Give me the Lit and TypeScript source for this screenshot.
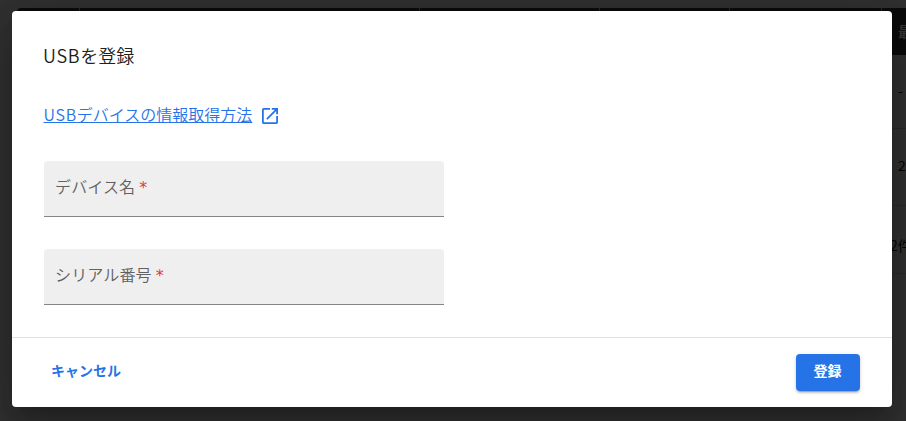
import { LitElement, html, css } from "lit";
import { customElement, property } from "lit/decorators.js";

const uiFont = css`"Noto Sans CJK JP", "Noto Sans", sans-serif`;

@customElement("device-table")
class DeviceTable extends LitElement {
  static styles = css`
    :host { display: block; width: 1100px; color: #050505; font: 14px/20px ${uiFont}; }
    .row { display: grid; grid-template-columns: 63px 340px 180px 130px 152px 1fr; box-sizing: border-box; border-bottom: 1px solid #292929; }
    .head { height: 47px; background: #0b0b0b; color: #353535; border: 0; border-radius: 4px 4px 0 0; font-weight: 700; }
    .first { height: 74px; }
    .second { height: 77px; }
    .cell { box-sizing: border-box; display: flex; align-items: center; padding: 0 16px 4px; }
    .head .cell { border-right: 1px solid #292929; padding-bottom: 2px; }
    .foot { height: 68px; box-sizing: border-box; padding: 29px 0 0 873px; border-bottom: 1px solid #292929; }
  `;
  row(name: string, cells: string[]) {
    return html`<div class="row ${name}">${cells.map((c) => html`<div class="cell">${c}</div>`)}</div>`;
  }
  render() {
    return html`
      ${this.row("head", ["", "", "", "", "", "最"])}
      ${this.row("first", ["", "", "", "", "", "-"])}
      ${this.row("second", ["", "", "", "", "", "2"])}
      <div class="foot">2件</div>
    `;
  }
}

@customElement("text-field")
class TextField extends LitElement {
  @property() label = "";
  static styles = css`
    :host { display: block; }
    .field { box-sizing: border-box; width: 400px; height: 56px; padding: 13px 11px 0; background: #efefef; border-bottom: 1px solid #858585; border-radius: 4px 4px 0 0; color: #606060; font: 350 16px/24px ${uiFont}; letter-spacing: 0.15px; }
    .mark { color: #dc3c3c; margin-left: 4px; font-family: "DejaVu Sans", sans-serif; font-weight: 400; line-height: 1; }
  `;
  render() {
    return html`<div class="field">${this.label}<span class="mark">*</span></div>`;
  }
}

@customElement("app-root")
class AppRoot extends LitElement {
  static styles = css`
    :host { display: block; position: relative; width: 906px; height: 421px; overflow: hidden; background: #303030; font-family: ${uiFont}; }
    .page { padding: 8px 0 0 17px; }
    .overlay { position: absolute; inset: 0; display: flex; padding: 11px 14px 14px 12px; }
    .dialog { flex: 1; display: flex; flex-direction: column; background: #fff; border-radius: 4px; box-shadow: 0 11px 15px -7px rgba(0,0,0,.2), 0 24px 38px 3px rgba(0,0,0,.14), 0 9px 46px 8px rgba(0,0,0,.12); }
    .body { flex: 1; padding: 30px 32px 0 31px; }
    .title { margin: 0; font-weight: 350; font-size: 18px; line-height: 28px; color: #202020; }
    .latin { letter-spacing: 0.7px; }
    .link { display: flex; align-items: center; margin-top: 33px; height: 24px; color: #2673e8; font-weight: 350; font-size: 16px; line-height: 24px; }
    .link a { color: inherit; text-decoration: underline; margin-left: 0.5px; }
    .link svg { margin: 4px 0 0 9.5px; width: 16px; height: 16px; fill: currentColor; }
    .fields { display: flex; flex-direction: column; gap: 32px; margin: 35px 0 0 1px; }
    .actions { display: flex; align-items: center; justify-content: space-between; box-sizing: border-box; height: 70px; border-top: 1px solid #e0e0e0; padding: 0 32px; }
    button { border: 0; padding: 0; background: none; font: 700 14px/20px ${uiFont}; height: 37px; border-radius: 4px; }
    .cancel { padding: 0 7px 5px; color: #2673e8; }
    .submit { width: 64px; padding: 0 1px 5px 0; color: #fff; background: #2673e8; box-shadow: 0 3px 1px -2px rgba(0,0,0,.2), 0 2px 2px rgba(0,0,0,.14), 0 1px 5px rgba(0,0,0,.12); }
  `;
  render() {
    return html`
      <div class="page"><device-table></device-table></div>
      <div class="overlay">
        <div class="dialog">
          <div class="body">
            <h2 class="title"><span class="latin">USB</span>を登録</h2>
            <div class="link">
              <a><span class="latin">USB</span>デバイスの情報取得方法</a>
              <svg viewBox="3 3 18 18"><path d="M19 19H5V5h7V3H5c-1.11 0-2 .9-2 2v14c0 1.1.89 2 2 2h14c1.1 0 2-.9 2-2v-7h-2v7zM14 3v2h3.59l-9.83 9.83 1.41 1.41L19 6.41V10h2V3h-7z"/></svg>
            </div>
            <div class="fields">
              <text-field label="デバイス名"></text-field>
              <text-field label="シリアル番号"></text-field>
            </div>
          </div>
          <div class="actions">
            <button class="cancel">キャンセル</button>
            <button class="submit">登録</button>
          </div>
        </div>
      </div>
    `;
  }
}
